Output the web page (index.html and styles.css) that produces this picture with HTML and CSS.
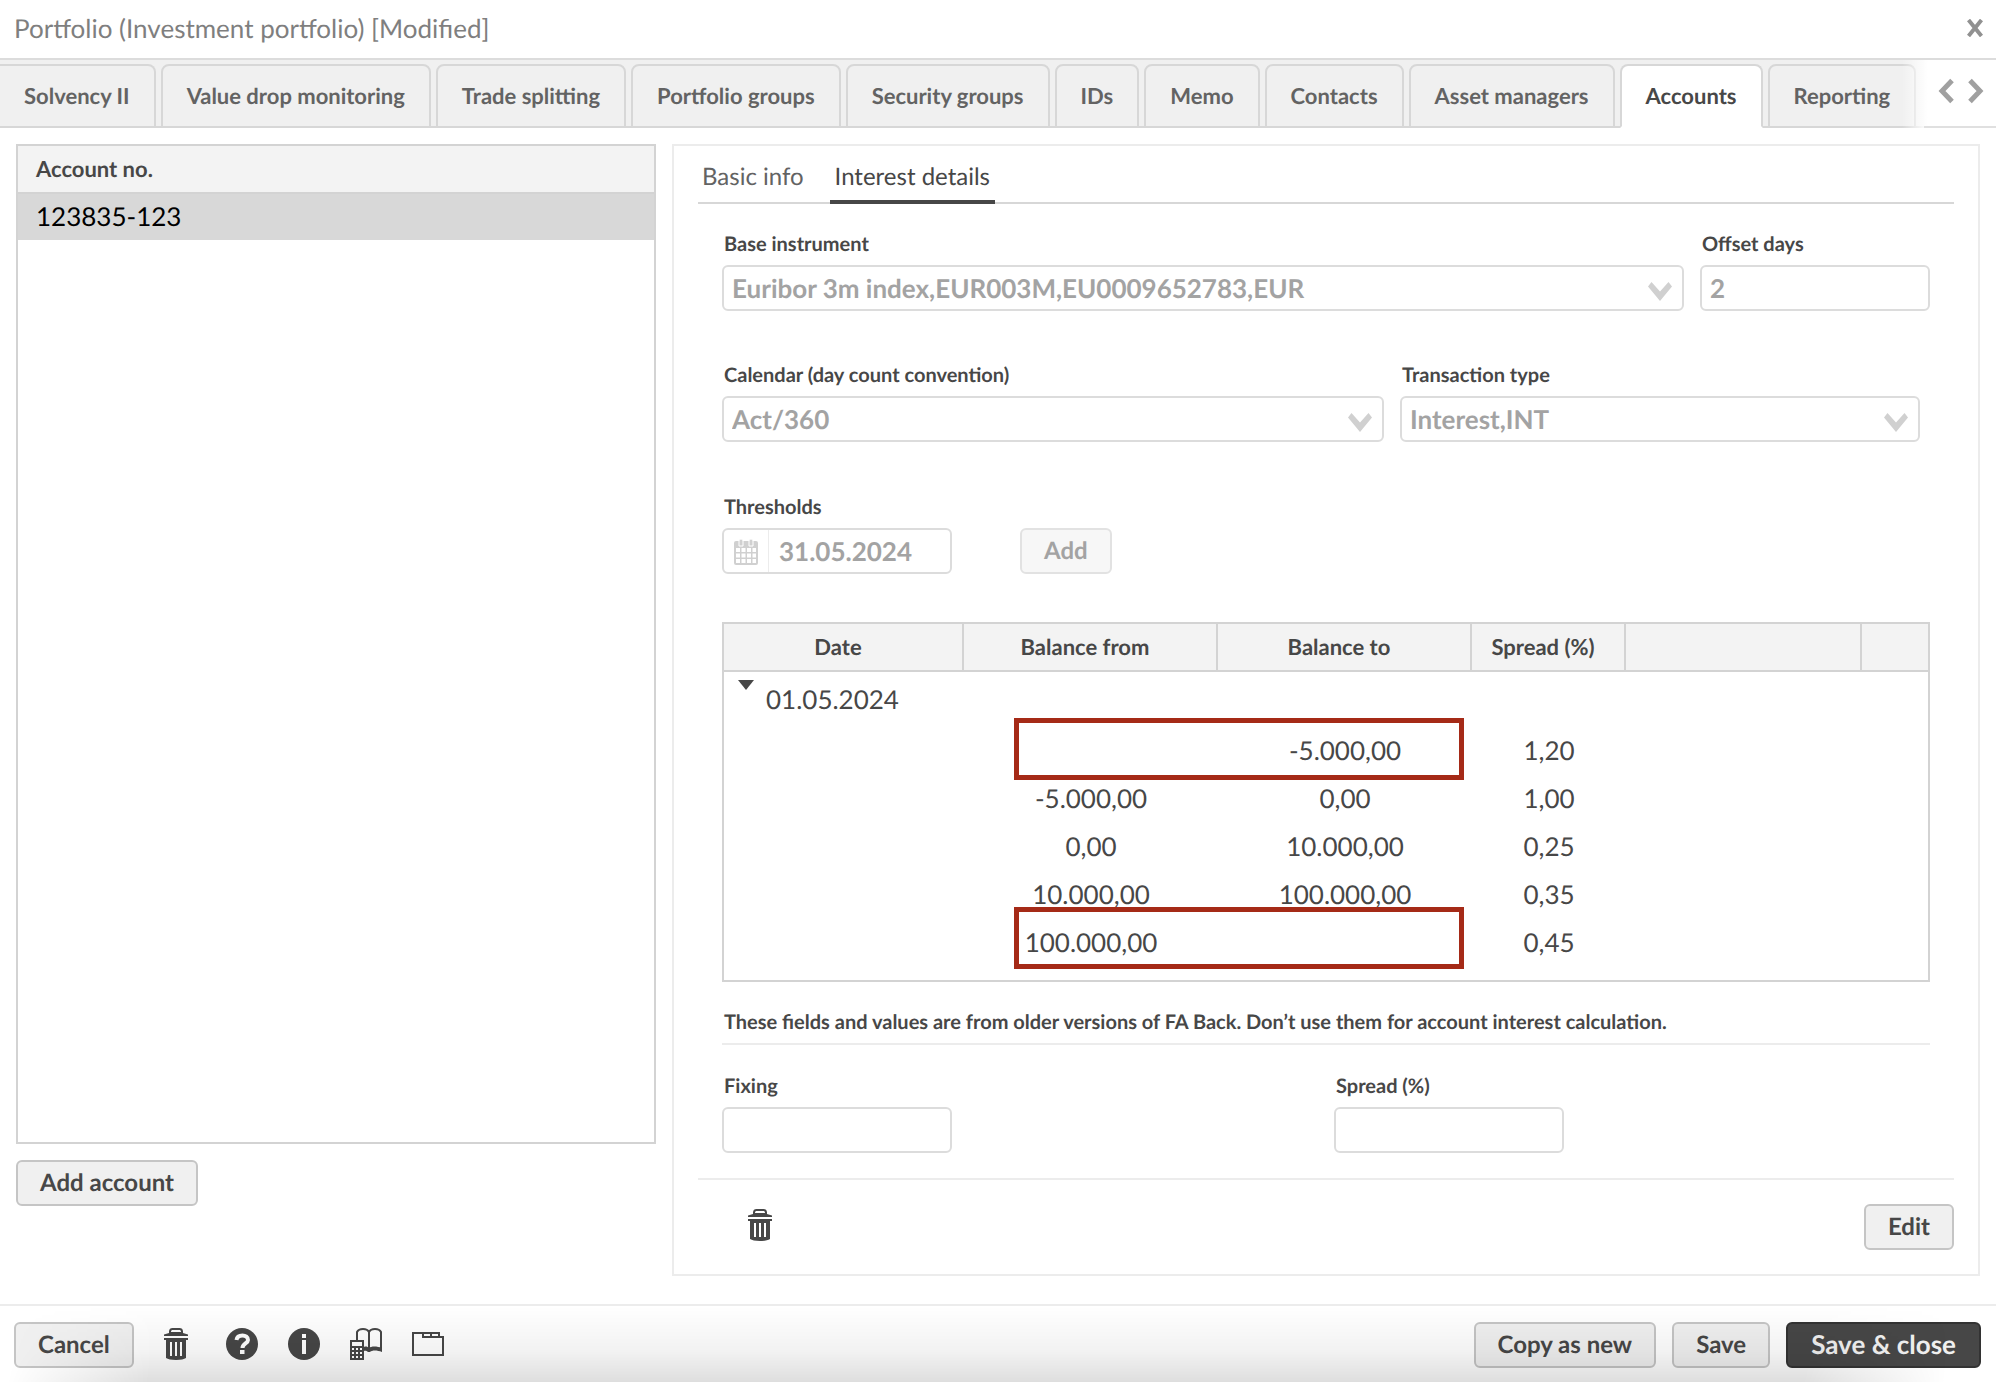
FILE: index.html
```html
<!DOCTYPE html>
<html lang="en">
<head>
<meta charset="utf-8">
<title>Portfolio</title>
<link rel="stylesheet" href="styles.css">
</head>
<body>
<svg class="defs" aria-hidden="true">
  <symbol id="trash" viewBox="0 0 24 32">
    <path d="M0 6.500L5 5V3.500C5 1 6.500 0 8.500 0h7C17.500 0 19 1 19 3.500V5l5 1.500V8H0zM7 4h10c0-1.500-.5-2-2-2H9C7.500 2 7 2.500 7 4zM0 10h24v2h-2v18c-2 1.300-5 2-10 2s-8-.700-10-2V12H0zM6 14v14h2V14zm5 0v14h2V14zm5 0v14h2V14z" fill-rule="evenodd"/>
  </symbol>
  <symbol id="chevron" viewBox="0 0 24 20"><path d="M0 4.500L3.500 0 12 9.500 20.500 0 24 4.500 12 19z"/></symbol>
</svg>
<div class="dialog">
  <header class="titlebar">
    <h1 class="title">Portfolio (Investment portfolio) [Modified]</h1>
    <button class="close" type="button" aria-label="Close"><svg width="16" height="18" viewBox="0 0 16 18"><path d="M1.500 1L14.500 17M14.500 1L1.500 17" stroke="currentColor" stroke-width="4"/></svg></button>
  </header>
  <nav class="tabbar">
    <div class="tabs">
      <button class="tab tab-first" type="button">Solvency II</button>
      <button class="tab" type="button">Value drop monitoring</button>
      <button class="tab" type="button">Trade splitting</button>
      <button class="tab" type="button">Portfolio groups</button>
      <button class="tab" type="button">Security groups</button>
      <button class="tab" type="button">IDs</button>
      <button class="tab" type="button">Memo</button>
      <button class="tab" type="button">Contacts</button>
      <button class="tab" type="button">Asset managers</button>
      <button class="tab tab-active" type="button">Accounts</button>
      <button class="tab" type="button">Reporting</button>
    </div>
    <div class="scroller">
      <button class="scroll" type="button" aria-label="Previous tabs"><svg width="16" height="26" viewBox="0 0 16 26"><path d="M14 2.500L4 13 14 23.500" fill="none" stroke="currentColor" stroke-width="5"/></svg></button>
      <button class="scroll" type="button" aria-label="Next tabs"><svg width="16" height="26" viewBox="0 0 16 26"><path d="M2 2.500L12 13 2 23.500" fill="none" stroke="currentColor" stroke-width="5"/></svg></button>
    </div>
  </nav>
  <main class="content">
    <section class="accounts">
      <div class="account-list">
        <table class="account-table">
          <thead><tr><th>Account no.</th></tr></thead>
          <tbody><tr><td>123835-123</td></tr></tbody>
        </table>
      </div>
      <button class="btn" type="button">Add account</button>
    </section>
    <section class="panel">
      <div class="subtabs">
        <button class="subtab" type="button">Basic info</button>
        <button class="subtab subtab-active" type="button">Interest details</button>
      </div>
      <div class="form">
        <div class="row">
          <div class="field grow">
            <label for="base">Base instrument</label>
            <div class="select"><select id="base" disabled><option>Euribor 3m index,EUR003M,EU0009652783,EUR</option></select><svg class="arrow"><use href="#chevron"/></svg></div>
          </div>
          <div class="field short">
            <label for="offset">Offset days</label>
            <input id="offset" class="input" value="2" disabled>
          </div>
        </div>
        <div class="row row-inset">
          <div class="field wide-a">
            <label for="calendar">Calendar (day count convention)</label>
            <div class="select"><select id="calendar" disabled><option>Act/360</option></select><svg class="arrow"><use href="#chevron"/></svg></div>
          </div>
          <div class="field wide-b">
            <label for="type">Transaction type</label>
            <div class="select"><select id="type" disabled><option>Interest,INT</option></select><svg class="arrow"><use href="#chevron"/></svg></div>
          </div>
        </div>
        <div class="row row-date">
          <div class="field short">
            <label for="date">Thresholds</label>
            <div class="date">
              <span class="date-icon"><svg width="24" height="27" viewBox="0 0 24 27"><rect x="0" y="3" width="24" height="24" rx="2"/><path d="M5 8V3a2 2 0 0 1 4 0v5zM15 8V3a2 2 0 0 1 4 0v5z" stroke="#fff" stroke-width="1"/><path d="M2 10h4v4H2zM7.500 10h4v4h-4zM13 10h4v4h-4zM18.500 10H22v4h-3.500zM2 15.500h4v4H2zM7.500 15.500h4v4h-4zM13 15.500h4v4h-4zM18.500 15.500H22v4h-3.500zM2 21h4v4H2zM7.500 21h4v4h-4zM13 21h4v4h-4zM18.500 21H22v4h-3.500z" fill="#fff"/></svg></span>
              <input id="date" value="31.05.2024" disabled>
            </div>
          </div>
          <button class="btn" type="button" disabled>Add</button>
        </div>
        <div class="thresholds">
          <table class="grid">
            <colgroup><col class="c-date"><col class="c-from"><col class="c-to"><col class="c-spread"><col><col class="c-last"></colgroup>
            <thead><tr><th>Date</th><th>Balance from</th><th>Balance to</th><th>Spread (%)</th><th></th><th></th></tr></thead>
            <tbody>
              <tr class="group"><td><span class="group-cell"><svg class="caret" width="16" height="10" viewBox="0 0 16 10"><path d="M0 0h16L8 10z"/></svg>01.05.2024</span></td><td></td><td></td><td></td><td></td><td></td></tr>
              <tr><td></td><td></td><td>-5.000,00</td><td>1,20</td><td></td><td></td></tr>
              <tr><td></td><td>-5.000,00</td><td>0,00</td><td>1,00</td><td></td><td></td></tr>
              <tr><td></td><td>0,00</td><td>10.000,00</td><td>0,25</td><td></td><td></td></tr>
              <tr><td></td><td>10.000,00</td><td>100.000,00</td><td>0,35</td><td></td><td></td></tr>
              <tr><td></td><td>100.000,00</td><td></td><td>0,45</td><td></td><td></td></tr>
            </tbody>
          </table>
          <div class="mark mark-first"></div>
          <div class="mark mark-last"></div>
        </div>
        <p class="note">These fields and values are from older versions of FA Back. Don’t use them for account interest calculation.</p>
        <div class="legacy">
          <div class="field short"><label for="fixing">Fixing</label><input id="fixing" class="input"></div>
          <div class="field short"><label for="spread">Spread (%)</label><input id="spread" class="input"></div>
        </div>
      </div>
      <div class="panel-actions">
        <button class="icon" type="button" aria-label="Delete account"><svg width="24" height="32"><use href="#trash"/></svg></button>
        <button class="btn" type="button">Edit</button>
      </div>
    </section>
  </main>
  <footer class="footer">
    <button class="btn" type="button">Cancel</button>
    <div class="tools">
      <button class="icon icon-delete" type="button" aria-label="Delete"><svg width="24" height="32"><use href="#trash"/></svg></button>
      <button class="icon" type="button" aria-label="Help"><svg width="32" height="32" viewBox="0 0 32 32"><circle cx="16" cy="16" r="16"/><path d="M10.500 12C11 8.500 13.500 7.500 16.500 7.500c3 0 5.500 1.500 5.500 4.500 0 3.500-5.500 3.500-5.500 8" fill="none" stroke="#fff" stroke-width="4"/><path d="M14 22h4.500v4H14z" fill="#fff"/></svg></button>
      <button class="icon" type="button" aria-label="Information"><svg width="32" height="32" viewBox="0 0 32 32"><circle cx="16" cy="16" r="16"/><path d="M14 6h4v4h-4zM14 12h4v14h-4z" fill="#fff"/></svg></button>
      <button class="icon" type="button" aria-label="Accounting"><svg width="32" height="32" viewBox="0 0 32 32"><path d="M0 12h14v20H0zM2 14v4h10v-4zM2 20v2h2v-2zm4 0v2h2v-2zm4 0v2h2v-2zM2 24v2h2v-2zm4 0v2h2v-2zm4 0v2h2v-2zM2 28v2h2v-2zm4 0v2h2v-2zm4 0v2h2v-2z" fill-rule="evenodd"/><path d="M7 12V4c2-4 10-4 12 0v19M19 4c2-4 10-4 12 0v19" fill="none" stroke="currentColor" stroke-width="2"/><path d="M14 19c2-1 4 0 5 1 2-2 8-2 13 0v4c-5-2-10-2-12 0h-2c-1-1-3-1.500-4-1z"/></svg></button>
      <button class="icon" type="button" aria-label="Documents"><svg width="32" height="24" viewBox="0 0 32 24"><path d="M1 1h26v4h4v18H1zM11 1v4h16M19 1v4" fill="none" stroke="currentColor" stroke-width="2"/></svg></button>
    </div>
    <button class="btn" type="button">Copy as new</button>
    <button class="btn" type="button">Save</button>
    <button class="btn btn-dark" type="button">Save &amp; close</button>
  </footer>
</div>
</body>
</html>
```

FILE: styles.css
```css
* { box-sizing: border-box; }
body { margin: 0; background: #fff; color: #474747; font-family: Lato, sans-serif; font-size: 26px; text-rendering: geometricPrecision; }
button, input, select { font: inherit; color: inherit; margin: 0; text-rendering: inherit; }
button { background: none; border: 0; padding: 0; }
svg { display: block; fill: currentColor; }
.defs { position: absolute; width: 0; height: 0; }
.dialog { min-height: 100vh; display: flex; flex-direction: column; }

.titlebar { display: flex; align-items: center; justify-content: space-between; height: 60px; padding: 0 13px 2px 14px; border-bottom: 2px solid #dcdcdc; }
.title { margin: 0; font-size: 26px; font-weight: 400; line-height: 32px; color: #7f7f7f; }
.close { color: #919191; }

.tabbar { display: flex; position: relative; height: 68px; background: #f0f0f0; }
.tabs { display: flex; flex: 1; min-width: 0; overflow: hidden; gap: 5px; padding-top: 4px; background: linear-gradient(#d7d7d7, #d7d7d7) bottom / 100% 2px no-repeat; }
.tab { flex: none; padding: 0 24px 2px; border: 2px solid #d7d7d7; border-radius: 8px 8px 0 0; background: #f0f0f0; color: #636363; font-size: 22px; font-weight: 700; }
.tab-first { border-left: 0; border-top-left-radius: 0; }
.tab-active { background: #fff; border-bottom-color: #fff; color: #474747; }
.scroller { position: absolute; top: 0; right: 0; bottom: 0; display: flex; align-items: center; gap: 14px; padding: 0 12px 6px 36px; background: linear-gradient(#e0e0e0, #e0e0e0) right bottom / 72px 2px no-repeat, linear-gradient(90deg, rgba(255,255,255,0), #fff 26px); color: #a0a0a0; }

.content { flex: 1; display: flex; gap: 16px; padding: 16px 16px 28px; }
.accounts { flex: 0 0 640px; display: flex; flex-direction: column; align-items: flex-start; gap: 16px; padding-bottom: 70px; }
.account-list { flex: 1; width: 100%; border: 2px solid #d3d3d3; }
.account-table { width: 100%; border-collapse: collapse; }
.account-table th { height: 47px; padding: 0 18px 2px; border-bottom: 2px solid #d3d3d3; background: #f3f3f3; text-align: left; font-size: 22px; }
.account-table td { height: 47px; padding: 0 18px 2px; background: #d8d8d8; color: #000; font-size: 26px; }

.btn { height: 46px; padding: 0 22px 2px; border: 2px solid #c5c5c5; border-radius: 6px; background: #f0f0f0; font-size: 24px; font-weight: 700; white-space: nowrap; }
.btn:disabled { border-color: #e2e2e2; background: #f7f7f7; color: #a3a3a3; }
.btn-dark { padding: 0 23px 2px; border-color: #333; background: #474747; color: #f0f0f0; font-size: 26px; }

.panel { flex: 1; min-width: 0; display: flex; flex-direction: column; padding: 0 24px; border: 2px solid #ececec; }
.subtabs { display: flex; gap: 26px; height: 58px; padding-left: 4px; background: linear-gradient(#d7d7d7, #d7d7d7) bottom / 100% 2px no-repeat; }
.subtab { padding-top: 6px; font-size: 24px; color: #636363; border-bottom: 4px solid transparent; }
.subtab-active { padding-left: 5px; padding-right: 5px; color: #474747; border-color: #474747; }

.form { padding: 28px 24px 25px; }
.row { display: flex; gap: 16px; margin-bottom: 52px; }
.row-inset { margin-bottom: 53px; padding-right: 10px; }
.row-date { align-items: flex-end; gap: 68px; margin-bottom: 48px; }
.field { display: flex; flex-direction: column; gap: 9px; min-width: 0; }
.field label { padding-left: 2px; font-size: 20px; line-height: 24px; font-weight: 700; }
.grow { flex: 1; }
.wide-a { flex: 662 1 0; }
.wide-b { flex: 520 1 0; }
.short { flex: 0 0 230px; }
.input, .select select, .date { width: 100%; height: 46px; border: 2px solid #dcdcdc; border-radius: 6px; background: #fff; padding: 0 8px; font-weight: 700; }
.input:disabled, select:disabled, .date input { color: #a3a3a3; opacity: 1; }
.select { position: relative; }
.select select { display: block; appearance: none; }
.arrow { position: absolute; right: 12px; top: 17px; width: 24px; height: 20px; color: #d0d0d0; }
.date { display: flex; padding: 0; }
.date-icon { display: flex; align-items: center; padding: 0 10px; border-right: 1px solid #ececec; color: #d0d0d0; }
.date input { flex: 1; min-width: 0; border: 0; background: none; padding: 0 10px; font-weight: 700; }

.thresholds { position: relative; padding-bottom: 14px; border: 2px solid #d3d3d3; }
.grid { width: 100%; table-layout: fixed; border-collapse: separate; border-spacing: 0; }
.c-date { width: 240px; }
.c-from, .c-to { width: 254px; }
.c-spread { width: 154px; }
.c-last { width: 66px; }
.grid th { height: 48px; padding: 0 10px 2px 0; border-right: 2px solid #d3d3d3; border-bottom: 2px solid #d3d3d3; background: #f3f3f3; font-size: 22px; }
.grid th:last-child { border-right: 0; }
.grid td { height: 48px; padding: 0; text-align: center; font-size: 26px; }
.grid .group td { height: 54px; vertical-align: top; }
.group-cell { display: flex; gap: 12px; padding: 8px 0 0 14px; line-height: 38px; }
.mark { position: absolute; left: 290px; width: 450px; height: 62px; border: 5px solid #a52a17; }
.mark-first { top: 94px; }
.mark-last { bottom: 11px; }
.note { margin: 28px 0 29px; padding: 0 2px 8px; border-bottom: 2px solid #ececec; font-size: 20px; line-height: 25px; font-weight: 700; }
.legacy { display: flex; gap: 382px; }
.panel-actions { flex: 1; display: flex; align-items: flex-start; justify-content: space-between; padding: 24px 0 24px 50px; border-top: 2px solid #ececec; }
.panel-actions .icon { padding-top: 5px; }

.footer { position: relative; display: flex; align-items: center; gap: 16px; height: 78px; padding: 2px 15px 0 14px; border-top: 2px solid #ececec; }
.footer::after { content: ""; position: absolute; inset: 0; pointer-events: none; background: linear-gradient(rgba(0,0,0,0), rgba(0,0,0,.05) 60%, rgba(0,0,0,.13)); mask-image: linear-gradient(100deg, transparent 20px, #000 160px, #000 calc(100% - 190px), transparent calc(100% - 50px)); }
.tools { flex: 1; display: flex; align-items: center; gap: 30px; padding: 0 0 2px 14px; }
.icon { color: #474747; }
.icon-delete { padding-right: 8px; }
```
